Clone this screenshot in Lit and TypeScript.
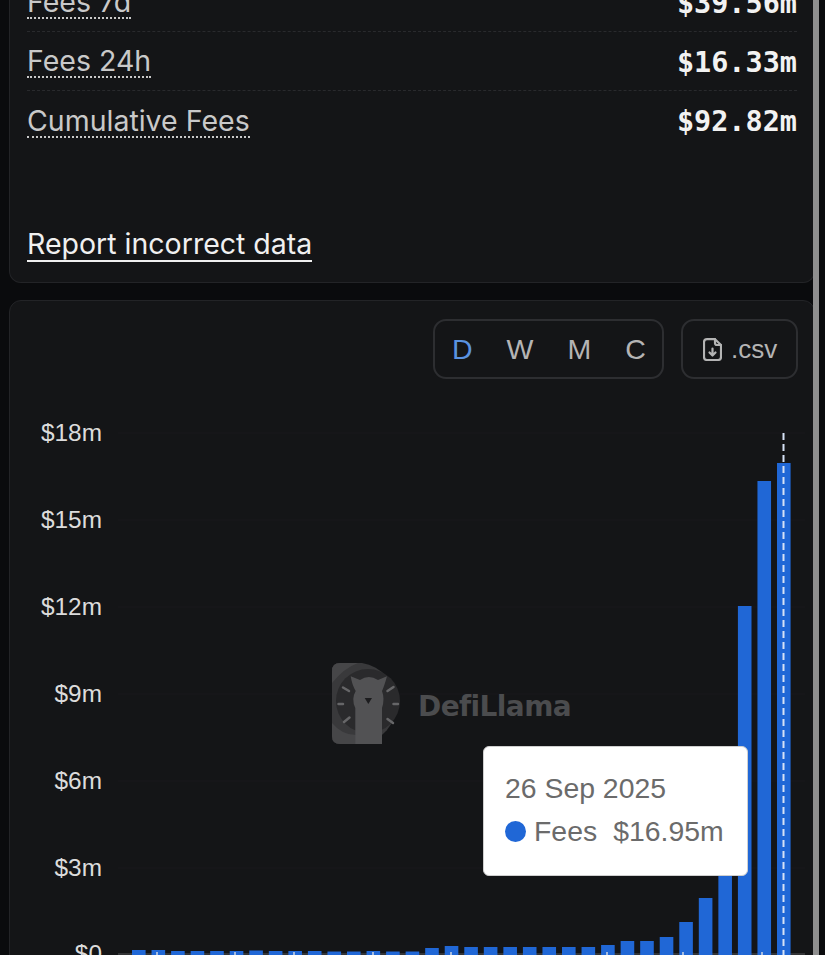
import { LitElement, html, css, svg } from "lit";
import { customElement } from "lit/decorators.js";

const BASE = 954;
const BAR_W = 13.6;
const tops = [950,950,951,951,951,951,950.5,951,951,951,951.5,951.5,951,951.5,951.5,948,946,947,947,947,947,947,947,947,945,941,941,937,922,898,860,606,481,463];
const yTicks = [["$18m",433],["$15m",520],["$12m",607],["$9m",694],["$6m",781],["$3m",868],["$0",954]] as const;
const xTicks = [157,235,294,373,451,607,683,762];

@customElement("app-root")
export class AppRoot extends LitElement {
  static styles = css`
    :host { display: block; position: relative; width: 825px; height: 955px; overflow: hidden; background: #0a0b0d; }
    .page { display: flex; flex-direction: column; gap: 17px; width: 806px; margin: -27px 0 0 9px; }
    .card { background: #141517; border: 1px solid #232427; border-radius: 12px; box-sizing: border-box; }
    .stats { padding: 0 17px; height: 310px; border-top: 0; display: flex; flex-direction: column; }
    .row { flex: none; display: flex; align-items: center; justify-content: space-between; border-bottom: 1px dashed #292a2d; padding-top: 1px; box-sizing: border-box; height: 59px; }
    .row.last { border-bottom: 0; }
    .label { font: 400 28.5px/31px "Inter", sans-serif; color: #c9c9c9; border-bottom: 2px dotted #c9c9c9; }
    .value { font: 700 28.5px/32px "DejaVu Sans Mono", monospace; color: #f2f2f2; padding-top: 2px; }
    .report { margin-top: 78px; font: 400 28.5px/32px "Inter", sans-serif; color: #f0f0f0; border-bottom: 2px solid #f0f0f0; align-self: flex-start; }
    .chartcard { height: 720px; padding-top: 18px; }
    .toolbar { display: flex; justify-content: flex-end; gap: 17px; padding-right: 16px; height: 60px; }
    .group, .csv { border: 2px solid #2d2e31; border-radius: 13px; box-sizing: border-box; height: 60px; display: flex; align-items: center; }
    .group { width: 231px; }
    .group span { padding: 0 17px; font: 400 28.5px/32px "Liberation Sans", sans-serif; color: #b4b4b4; }
    .group span.on { color: #5a92e0; }
    .csv { width: 117px; padding-left: 20px; gap: 9px; font: 400 26px/30px "Liberation Sans", sans-serif; color: #b4b4b4; }
    .csv svg { width: 19px; height: 23px; flex: none; }
    .chart { position: relative; margin-top: 21px; height: 590px; }
    .chart > svg { display: block; width: 804px; height: 590px; }
    .ylabel { font: 400 24.4px "Liberation Sans", sans-serif; fill: #dcdcdc; text-anchor: end; }
    .grid { stroke: #18191c; stroke-width: 1; }
    .axis { stroke: #3e3f42; stroke-width: 1.5; }
    .bar { fill: #2067d6; }
    .xtick { stroke: #cfd6e2; stroke-width: 1.5; }
    .cross { stroke: #d6e2f6; stroke-width: 2; stroke-dasharray: 7 4; }
    .mark { position: absolute; left: 322px; top: 263px; display: flex; align-items: center; gap: 13px; }
    .mark svg { width: 73px; height: 82px; flex: none; }
    .mark span { font: 700 28px/32px "DejaVu Sans", sans-serif; color: #4b4c4e; letter-spacing: -0.6px; padding-top: 5px; }
    .tip { position: absolute; left: 473px; top: 346px; width: 265px; height: 130px; box-sizing: border-box; background: #fff; border: 1px solid #cfcfcf; border-radius: 6px; padding: 20px 21px; color: #6b6b6b; font: 400 28.4px/43px "Liberation Sans", sans-serif; white-space: nowrap; }
    .tipline { display: flex; align-items: center; }
    .dot { width: 21px; height: 21px; border-radius: 50%; background: #2067d6; margin-right: 8px; flex: none; }
    .amt { margin-left: 16px; }
    .scroll { position: absolute; left: 813px; top: 0; bottom: 0; width: 6px; background: #8f8f8f; }
  `;

  render() {
    const x0 = 132;
    const pitch = (777 - 132) / 33;
    return html`
      <div class="page">
        <section class="card stats">
          <div class="row"><span class="label">Fees 7d</span><span class="value">$39.56m</span></div>
          <div class="row"><span class="label">Fees 24h</span><span class="value">$16.33m</span></div>
          <div class="row last"><span class="label">Cumulative Fees</span><span class="value">$92.82m</span></div>
          <a class="report">Report incorrect data</a>
        </section>
        <section class="card chartcard">
          <div class="toolbar">
            <div class="group"><span class="on">D</span><span>W</span><span>M</span><span>C</span></div>
            <div class="csv">
              <svg viewBox="0 0 19 23" fill="none" stroke="currentColor" stroke-width="2.2" stroke-linecap="round" stroke-linejoin="round">
                <path d="M4 1.2H12L18 7V19A3 3 0 0 1 15 22H4A3 3 0 0 1 1 19V4.200A3 3 0 0 1 4 1.200Z" />
                <path d="M12 1.200V5A2 2 0 0 0 14 7H18" />
                <path d="M9.500 10.500V17M6.500 14.500L9.500 17.500L12.500 14.500" />
              </svg>
              <span>.csv</span>
            </div>
          </div>
          <div class="chart">
            <svg viewBox="10 400 804 590">
              ${yTicks.slice(0, 6).map(([, y]) => svg`<line class="grid" x1="118" x2="805" y1=${y} y2=${y}></line>`)}
              <line class="axis" x1="118" x2="805" y1=${BASE} y2=${BASE}></line>
              ${yTicks.map(([t, y]) => svg`<text class="ylabel" x="102" y=${y + 7.500}>${t}</text>`)}
              ${tops.map((t, i) => svg`<rect class="bar" x=${x0 + i * pitch} y=${t} width=${BAR_W} height=${BASE + 4 - t}></rect>`)}
              ${xTicks.map((x) => svg`<line class="xtick" x1=${x} x2=${x} y1="952" y2="958"></line>`)}
              <line class="cross" x1="783.500" x2="783.500" y1="433" y2="958"></line>
            </svg>
            <div class="mark">
              <svg viewBox="0 0 73 82">
                <path fill="#39393b" d="M8 0H30A41 41 0 0 1 30 81H8Q0 81 0 73V8Q0 0 8 0Z" />
                <path fill="#464648" d="M8 0H26Q12 5 0 20V8Q0 0 8 0ZM0 60Q10 72 24 72V81H8Q0 81 0 73Z" />
                <circle fill="#2a2a2c" cx="36" cy="38" r="32" />
                <path fill="#525254" d="M18.700 13.300L28 17Q36.700 11 46 17L55 13.300Q52 24 50 28Q53 36 50 45V81H23.300V45Q19 36 23.700 28Q20 22 18.700 13.300Z" />
                <path fill="#1c1c1e" d="M32.700 35H40L36.300 41Z" />
                <path fill="none" stroke="#666668" stroke-width="2.500" stroke-linecap="round" d="M11 24.500L17 28M55.500 28L61.500 24M6.500 41H11M61.500 41H66M12 59L17.500 54.500M55.500 56L61 60" />
              </svg>
              <span>DefiLlama</span>
            </div>
            <div class="tip">
              <div>26 Sep 2025</div>
              <div class="tipline"><i class="dot"></i><span>Fees</span><span class="amt">$16.95m</span></div>
            </div>
          </div>
        </section>
      </div>
      <div class="scroll"></div>
    `;
  }
}
